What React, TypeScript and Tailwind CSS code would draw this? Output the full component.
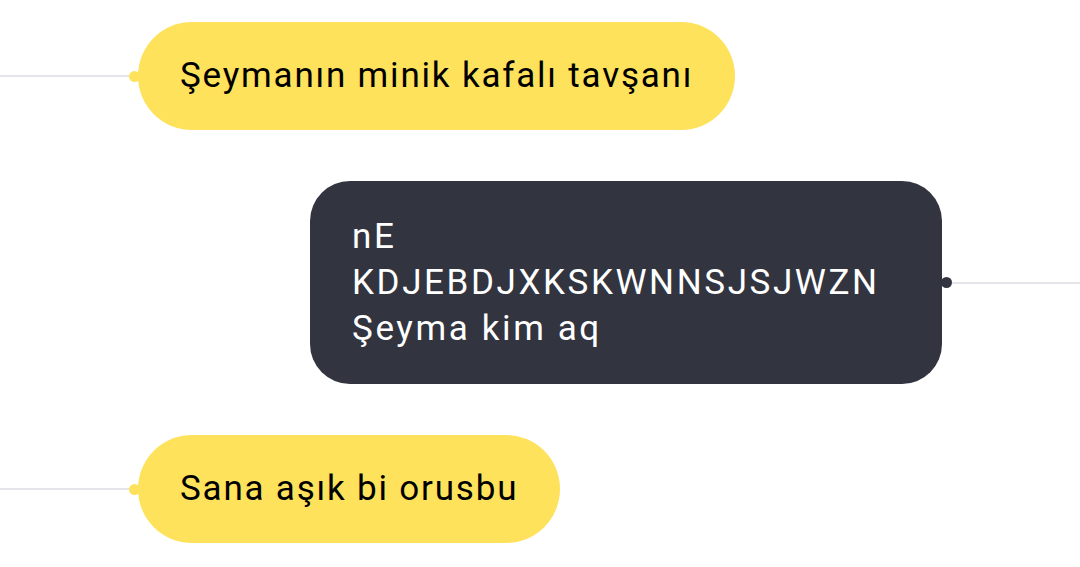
const yellow = 'bg-[#fee25b]'

const YellowNode = ({ text }: { text: string }) => (
  <div className="flex items-center">
    <div className="h-[2px] w-[129px] bg-[#e3e5ea]" />
    <div className={`h-[11px] w-[11px] rounded-full ${yellow} -mr-[2px]`} />
    <div
      className={`flex h-[108px] items-center rounded-full ${yellow} px-[42px] text-[35px] tracking-[1.8px] text-black`}
    >
      {text}
    </div>
  </div>
)

export default function App() {
  return (
    <div
      className="h-[567px] w-[1080px] overflow-hidden bg-white pt-[22px]"
      style={{ fontFamily: 'Roboto, "Noto Sans", sans-serif' }}
    >
      <div className="flex flex-col gap-[51px]">
        <YellowNode text="Şeymanın minik kafalı tavşanı" />

        <div className="flex items-center">
          <div className="ml-[310px] flex h-[203px] w-[632px] flex-col justify-center rounded-[40px] bg-[#32343f] px-[42px] text-[35px] leading-[46px] tracking-[2.6px] text-white">
            <span>nE</span>
            <span>KDJEBDJXKSKWNNSJSJWZN</span>
            <span>Şeyma kim aq</span>
          </div>
          <div className="-ml-[1px] h-[11px] w-[11px] rounded-full bg-[#32343f]" />
          <div className="h-[2px] flex-1 bg-[#e3e5ea]" />
        </div>

        <YellowNode text="Sana aşık bi orusbu" />
      </div>
    </div>
  )
}
